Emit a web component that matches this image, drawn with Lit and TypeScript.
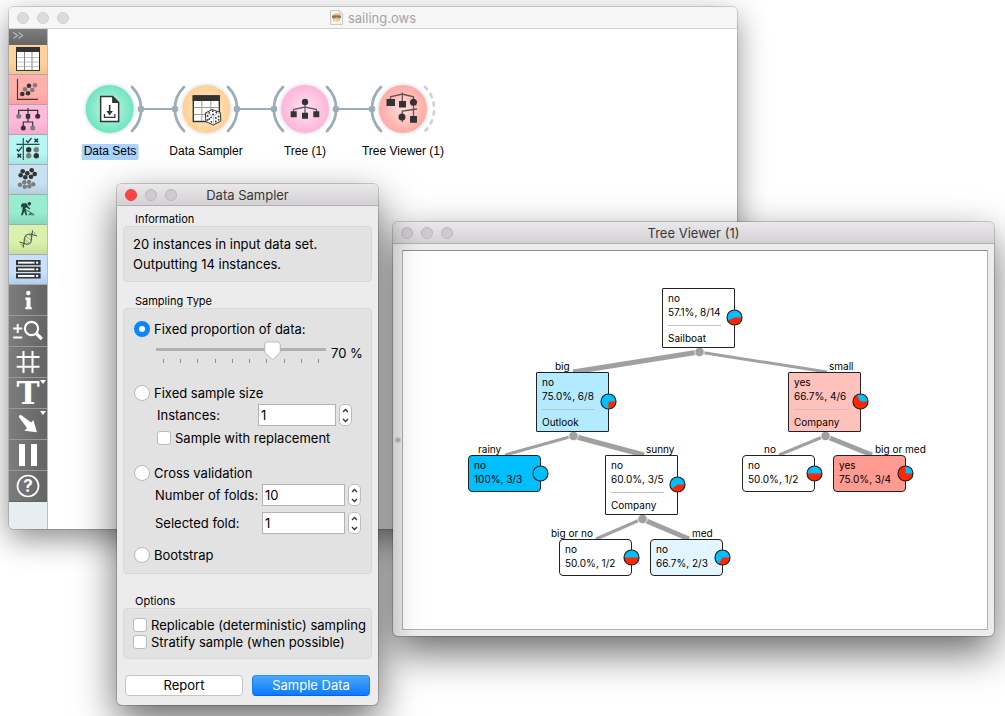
import { LitElement, html, svg, css, nothing } from "lit";
import { customElement, property } from "lit/decorators.js";

const DARK = "#333333";
const GREY = "#7c7c7c";

const dots = (pts: number[][], r: number, fill: string) =>
  pts.map(([x, y]) => svg`<circle cx=${x} cy=${y} r=${r} fill=${fill} />`);

/* ---------- Window frame shared by all three windows ---------- */

@customElement("desk-window")
export class DeskWindow extends LitElement {
  @property() heading = "";
  @property({ type: Boolean, reflect: true }) pale = false;
  @property({ type: Boolean }) closable = false;

  static styles = css`
    :host {
      display: flex;
      flex-direction: column;
      box-sizing: border-box;
      border-radius: 5px;
      background: #ececec;
      box-shadow: 0 0 0 1px rgba(0, 0, 0, 0.18), 0 16px 40px rgba(0, 0, 0, 0.6);
      font-family: Inter, "Liberation Sans", sans-serif;
      overflow: hidden;
    }
    :host([pale]) {
      background: #fff;
      box-shadow: 0 0 0 1px rgba(0, 0, 0, 0.14), 0 10px 30px rgba(0, 0, 0, 0.45);
    }
    .bar {
      display: grid;
      grid-template-columns: 1fr auto 1fr;
      align-items: center;
      height: 21px;
      flex: none;
      padding: 0 8px;
      background: linear-gradient(#eae8ea, #d3d1d3);
      border-bottom: 1px solid #b1afb1;
      color: #383838;
      font-size: 13px;
    }
    :host([pale]) .bar {
      background: #f6f6f6;
      border-bottom-color: #d1d1d1;
      color: #a3a3a3;
    }
    .lights {
      display: flex;
      gap: 8px;
    }
    .light {
      width: 12px;
      height: 12px;
      padding: 0;
      border: 1px solid #b9b7b9;
      border-radius: 50%;
      background: #cdcbcd;
    }
    :host([pale]) .light {
      background: #dcdcdc;
      border-color: #cfcfcf;
    }
    .light.close {
      background: #ff4541;
      border-color: #e5403c;
    }
    .title {
      display: flex;
      align-items: center;
      gap: 5px;
      margin: 0;
      font-size: 13px;
      font-weight: 400;
      line-height: 20px;
      white-space: nowrap;
    }
    .body {
      display: flex;
      flex: 1;
      min-height: 0;
    }
  `;

  render() {
    return html`
      <header class="bar">
        <div class="lights">
          <button class="light ${this.closable ? "close" : ""}" aria-label="Close"></button>
          <button class="light" aria-label="Minimize"></button>
          <button class="light" aria-label="Zoom"></button>
        </div>
        <h2 class="title"><slot name="icon"></slot>${this.heading}</h2>
      </header>
      <div class="body"><slot></slot></div>
    `;
  }
}

/* ---------- Toolbox on the left of the canvas ---------- */

const cross = (x: number, y: number) =>
  svg`<path d="M${x - 1.8} ${y - 1.8}l3.6 3.6m0 -3.6l-3.6 3.6" stroke=${DARK} stroke-width="1.5" />`;
const tick = (x: number, y: number) =>
  svg`<path d="M${x - 2.6} ${y}l1.8 2l3.6 -4.4" fill="none" stroke=${DARK} stroke-width="1.3" />`;

const CATEGORIES = [
  {
    name: "Data",
    tone: "c-data",
    art: svg`
      <rect x="7.5" y="2.5" width="23" height="23" fill="#fff" stroke=${DARK} />
      <path d="M8 12.5h22M8 17h22M8 21.500h22" stroke="#c4c4c4" />
      <path d="M15.500 7v18M23 7v18" stroke="#8a8a8a" />
      <rect x="7" y="2" width="24" height="5" fill=${DARK} />`,
  },
  {
    name: "Visualize",
    tone: "c-vis",
    art: svg`
      <path d="M8.500 4V24.300H29" fill="none" stroke="#4a3433" stroke-width="1.200" />
      ${dots([[26, 10.3], [16, 14.3], [23.3, 15]], 2.3, GREY)}
      ${dots([[20, 10.7], [13.3, 19], [19, 18.3]], 2.3, DARK)}`,
  },
  {
    name: "Model",
    tone: "c-model",
    art: svg`
      <path d="M19 3V17M9.700 10V5.300H28.700V10M14.300 22V17H23.700V22" fill="none" stroke=${DARK} stroke-width="1.200" />
      ${dots([[9.7, 11.3], [23.7, 23]], 2.5, GREY)}
      ${dots([[28.7, 11.3], [14.3, 23]], 2.5, DARK)}
      <rect x="16.800" y="9" width="4.400" height="4.600" fill=${DARK} />`,
  },
  {
    name: "Evaluate",
    tone: "c-eval",
    art: svg`
      <path d="M14.300 3V25M7.500 9.300H30.500" stroke="#2b4f4e" stroke-width="1.200" />
      ${tick(19.7, 5.5)}${cross(27.3, 5.5)}${tick(10.3, 14.3)}${cross(10.3, 20.7)}
      ${dots([[19.7, 14.7], [27.3, 20.7]], 2.7, DARK)}
      ${dots([[27.3, 14.7], [19.7, 20.7]], 2.7, GREY)}`,
  },
  {
    name: "Unsupervised",
    tone: "c-unsup",
    art: svg`
      ${dots([[15.3, 17.3], [20, 17], [11, 19.7], [24.3, 19.3], [15.7, 21.7], [20.3, 21.3]], 2.2, GREY)}
      ${dots([[13.7, 6.3], [22.7, 5.3], [18.3, 8.3], [11.7, 10.3], [25.7, 9], [16.3, 12.3], [22, 11.7]], 2.3, DARK)}`,
  },
  {
    name: "Prototypes",
    tone: "c-proto",
    art: svg`
      <circle cx="20.300" cy="8.700" r="1.700" fill=${DARK} />
      <path d="M11.800 10.600L13.500 8.200L17.500 8.300L19 11.200L21.300 13.800L20.500 14.500L17.500 12.300L16.200 13.600L17 15.800L18.300 20.300H16.700L15.200 16.300L13.800 20.300H12L13.400 15L13.600 11.200L12.600 12.700Z" fill="#23463b" />
      <path d="M14 13L22.500 18" stroke="#23463b" stroke-width="0.800" />
      <path d="M18.700 20.300L21 17.600L23 17.800L26.300 20.300Z" fill="#55776c" />`,
  },
  {
    name: "Bioinformatics",
    tone: "c-bio",
    art: svg`
      <g fill="none" stroke="#4e5741" stroke-width="1.200">
        <path d="M10.500 17Q14 18 17 19Q22 20 22.500 14.500Q22.300 10 23.700 5.500" />
        <path d="M14 22.500Q15.500 18 15.300 14.500Q16 9 20.500 9Q24 9.500 28 11" />
        <path d="M15.500 14L20.500 18.500M17 11.300L22.400 15.500M19.500 9.500L22.500 12M11.500 19.500L14 20.500M25 7L26.500 9" stroke="#8b9677" stroke-width="0.900" />
      </g>`,
  },
  {
    name: "Data Table",
    tone: "c-store",
    art: svg`${[5, 11.7, 18.3].map(
      (y) => svg`
        <rect x="7" y=${y} width="24.600" height="5.200" fill=${DARK} />
        <rect x="9" y=${y + 1.7} width="16.500" height="1.900" fill="#fff" />
        <rect x="27" y=${y + 1.7} width="2.200" height="1.900" fill="#fff" />`
    )}`,
  },
];

const CARET = svg`<path d="M31 2h6l-3 4z" fill="#fff" />`;

const TOOLS = [
  {
    name: "Info",
    art: svg`<circle cx="19.300" cy="8" r="2.200" fill="#fff" />
      <path d="M16.300 12.500H21.500V22H22.700V24.300H16.300V22H17.500V14.800H16.300Z" fill="#fff" />`,
  },
  {
    name: "Zoom",
    art: svg`<g fill="none" stroke="#fff">
      <path d="M4.200 12.500H13.200M8.700 8V17M4.200 21.500H13.200" stroke-width="2" />
      <circle cx="22.500" cy="12.500" r="6.600" stroke-width="2.200" />
      <path d="M27.300 17.500L32.800 23" stroke-width="3.200" /></g>`,
  },
  {
    name: "Align to grid",
    art: svg`<path d="M14.500 4V26M23.500 4V26M7.700 10H30.500M7.700 19.700H30.500" stroke="#fff" stroke-width="2" />`,
  },
  {
    name: "Text annotation",
    art: svg`<text x="19" y="26" text-anchor="middle" class="slab">T</text>${CARET}`,
  },
  {
    name: "Arrow annotation",
    art: svg`<path d="M10 6.500L12 6L22.200 13.600L24.300 10.900L28 23.300L15.500 21.700L18 18.900L9.800 8Z" fill="#fff" />${CARET}`,
  },
  {
    name: "Pause",
    art: svg`<path d="M10 4H16V26H10ZM22 4H28V26H22Z" fill="#fff" />`,
  },
  {
    name: "Help",
    art: svg`<circle cx="19" cy="15" r="10.500" fill="none" stroke="#fff" stroke-width="1.700" />
      <text x="19" y="21" text-anchor="middle" class="mark">?</text>`,
  },
];

@customElement("tool-dock")
export class ToolDock extends LitElement {
  static styles = css`
    :host {
      display: flex;
      flex-direction: column;
      width: 38px;
      flex: none;
      border-right: 1px solid #b9bcbe;
      background: #e6eef2;
    }
    button {
      display: block;
      width: 100%;
      padding: 0;
      border: 0;
    }
    svg {
      display: block;
      width: 100%;
      overflow: visible;
    }
    .more {
      height: 16px;
      background: linear-gradient(#7e7e7e, #666);
    }
    .cat {
      height: 30px;
      border-bottom: 1px solid #a9a9a9;
    }
    .tool {
      height: 31px;
      background: linear-gradient(90deg, #7d7d7d, #646464);
      border-bottom: 1px solid #999;
    }
    .tool:last-child {
      border-bottom-color: #646464;
    }
    .c-data { background: linear-gradient(#ffd39b 60%, #f0c48e); }
    .c-vis { background: linear-gradient(#ffb0ac 60%, #ff9f9b); }
    .c-model { background: linear-gradient(#ffb9dc 60%, #f5a9cd); }
    .c-eval { background: linear-gradient(#b4f7f3 60%, #a3e6e2); }
    .c-unsup { background: linear-gradient(#c6e1f2 60%, #b4cfdf); }
    .c-proto { background: linear-gradient(#98ecd0 60%, #88d9be); }
    .c-bio { background: linear-gradient(#d8f2ae 60%, #c5de9d); }
    .c-store { background: linear-gradient(#c7e0ff 60%, #b4cdeb); }
    .slab {
      font: bold 31px "DejaVu Serif", serif;
      fill: #fff;
    }
    .mark {
      font: bold 17px Inter, sans-serif;
      fill: #fff;
    }
  `;

  render() {
    return html`
      <button class="more" aria-label="Expand toolbox">
        <svg viewBox="0 0 38 16" height="16">
          <path d="M4.500 3.500L8.500 6.500L4.500 9.500M9.500 3.500L13.500 6.500L9.500 9.500" fill="none" stroke="#b9b9b9" stroke-width="1.200" />
        </svg>
      </button>
      ${CATEGORIES.map(
        (c) => html`<button class="cat ${c.tone}" aria-label=${c.name}>
          <svg viewBox="0 0 38 29" height="29">${c.art}</svg>
        </button>`
      )}
      ${TOOLS.map(
        (t) => html`<button class="tool" aria-label=${t.name}>
          <svg viewBox="0 0 38 30" height="30">${t.art}</svg>
        </button>`
      )}
    `;
  }
}

/* ---------- Workflow canvas ---------- */

const WIDGETS = [
  {
    name: "Data Sets",
    x: 62,
    tone: "w-green",
    selected: true,
    art: svg`
      <path d="M15 11.500H27L33 17.500V36.500H15Z" fill="#fff" stroke=${DARK} stroke-width="1.500" />
      <path d="M26.500 11V18H33.500Z" fill=${DARK} />
      <path d="M24 20V28" stroke=${DARK} stroke-width="1.600" />
      <path d="M20.800 26H27.200L24 30.500Z" fill=${DARK} />
      <path d="M18.800 29V32.300H29.200V29" fill="none" stroke=${DARK} stroke-width="1.300" />`,
  },
  {
    name: "Data Sampler",
    x: 158,
    tone: "w-orange",
    art: svg`
      <rect x="11" y="11" width="26" height="25.500" fill="#fff" stroke=${DARK} stroke-width="1.400" />
      <path d="M11.500 22.500H36.500M11.500 29.500H36.500M19.500 16V36M28.500 16V36" stroke="#a79a8a" />
      <rect x="10.300" y="10.300" width="27.400" height="5.700" fill=${DARK} />
      <path d="M23 28L30 24.500L38 27.500L38.500 36L31 40L23.500 36.500Z" fill="#fff" stroke=${DARK} stroke-width="1" stroke-linejoin="round" />
      <path d="M23 28L31.500 31L38 27.500M31.500 31L31 40" fill="none" stroke="#888" stroke-width="0.500" />
      ${dots([[27, 27.8], [30.5, 26.2], [34, 27.5], [30.8, 29.3], [25.3, 31], [28.8, 32.3], [27, 34], [25.3, 35], [29, 36.8], [33.5, 33], [36.3, 31.5], [33.5, 36.5], [36.3, 34.8]], 0.9, DARK)}`,
  },
  {
    name: "Tree (1)",
    x: 257,
    tone: "w-pink",
    art: svg`
      <path d="M24 17V28M12.500 28V24.500L24 22L35.500 24.500V28" fill="none" stroke="#6b5a62" stroke-width="1.300" />
      <circle cx="24" cy="17" r="3.200" fill=${DARK} />
      <path d="M9.700 26.300H15.700V32.300H9.700ZM21 27.800H27V33.800H21ZM32.300 26.300H38.300V32.300H32.300Z" fill=${DARK} />`,
  },
  {
    name: "Tree Viewer (1)",
    x: 355,
    tone: "w-red",
    art: svg`
      <path d="M23.300 7.500V17M11.500 16V11.800L23.300 9L34.500 11.800V34M23.300 37V26L38 24" fill="none" stroke="#6b504e" stroke-width="1.300" />
      <path d="M7.500 14H16V21H7.500ZM20 16H27V22.500H20ZM31 31H38V37.800H31Z" fill=${DARK} />
      <circle cx="34.500" cy="17.300" r="3.500" fill=${DARK} />
      <circle cx="23" cy="32" r="3.500" fill=${DARK} />`,
  },
];

@customElement("flow-canvas")
export class FlowCanvas extends LitElement {
  static styles = css`
    :host {
      display: block;
      position: relative;
      flex: 1;
      background: #fff;
      font: 12px "Liberation Sans", sans-serif;
      color: #000;
    }
    .links {
      position: absolute;
      left: 0;
      top: 0;
    }
    .widget {
      position: absolute;
      top: 56px;
      display: flex;
      flex-direction: column;
      align-items: center;
      gap: 11px;
      transform: translateX(-50%);
    }
    .disc {
      width: 48px;
      height: 48px;
      border-radius: 50%;
      box-shadow: 0 0 4px rgba(90, 120, 140, 0.35);
    }
    .name {
      padding: 0 2px 2px;
      line-height: 14px;
      border-radius: 2px;
      white-space: nowrap;
    }
    .name.on {
      background: #a9d2fd;
    }
    .w-green { background: radial-gradient(#cdf3e5, #6be5c0 72%); }
    .w-orange { background: radial-gradient(#fff0dd, #ffcf90 72%); }
    .w-pink { background: radial-gradient(#ffe4f1, #ffb3d8 72%); }
    .w-red { background: radial-gradient(#ffdfdc, #ffa9a3 72%); }
  `;

  render() {
    const y = 80;
    const right = (x: number) => `M${x + 22} ${y - 22}A31 31 0 0 1 ${x + 22} ${y + 22}`;
    const left = (x: number) => `M${x - 22} ${y - 22}A31 31 0 0 0 ${x - 22} ${y + 22}`;
    return html`
      <svg class="links" width="420" height="140" fill="none" stroke="#9badb8" stroke-width="2.800" stroke-linecap="round">
        ${WIDGETS.slice(1).map((w, i) => {
          const from = WIDGETS[i].x;
          return svg`
            <path d=${right(from)} />
            <path d=${left(w.x)} />
            <path d="M${from + 31} ${y}H${w.x - 31}" stroke-width="2" />
            <circle cx=${from + 31} cy=${y} r="3.300" fill="#9badb8" stroke="none" />
            <circle cx=${w.x - 31} cy=${y} r="3.300" fill="#9badb8" stroke="none" />`;
        })}
        <path d=${right(355)} stroke="#c9d4da" stroke-dasharray="3 6" />
      </svg>
      ${WIDGETS.map(
        (w) => html`<div class="widget" style="left:${w.x}px">
          <svg class="disc ${w.tone}" viewBox="0 0 48 48">${w.art}</svg>
          <span class="name ${w.selected ? "on" : ""}">${w.name}</span>
        </div>`
      )}
    `;
  }
}

/* ---------- Data Sampler form ---------- */

@customElement("sampler-form")
export class SamplerForm extends LitElement {
  static styles = css`
    :host {
      display: flex;
      flex-direction: column;
      flex: 1;
      min-width: 0;
      padding: 6px 6px 9px;
      font: 13px Inter, "Liberation Sans", sans-serif;
      color: #000;
    }
    h3 {
      margin: 0 0 0 12px;
      font-size: 11px;
      font-weight: 400;
      line-height: 14px;
    }
    .box {
      box-sizing: border-box;
      background: #e2e2e2;
      border: 1px solid #d9d9d9;
      border-radius: 4px;
      padding: 7px 4px 7px 9px;
      margin-bottom: 12px;
    }
    .info p {
      margin: 0;
      line-height: 20px;
    }
    .types {
      padding: 9px 4px 7px 10px;
      margin-bottom: 20px;
    }
    .row {
      display: flex;
      align-items: center;
      line-height: 16px;
      white-space: nowrap;
    }
    .choice {
      gap: 4px;
      height: 22px;
    }
    .sub {
      padding-left: 23px;
      height: 22px;
    }
    .check {
      gap: 4px;
      height: 24px;
    }
    .tight {
      height: 17px;
    }
    .opts {
      padding: 7px 4px 8px 9px;
    }
    .after {
      margin-bottom: 12px;
    }
    input {
      margin: 0;
      font: inherit;
      color: inherit;
    }
    input[type="radio"],
    input[type="checkbox"] {
      appearance: none;
      box-sizing: border-box;
      flex: none;
      background: #fff;
      border: 1px solid #b9b9b9;
    }
    input[type="radio"] {
      width: 16px;
      height: 16px;
      border-radius: 50%;
    }
    input[type="radio"]:checked {
      border: 5px solid #0a84ff;
    }
    input[type="checkbox"] {
      width: 14px;
      height: 14px;
      border-radius: 3px;
    }
    input[type="number"] {
      appearance: textfield;
      box-sizing: border-box;
      height: 22px;
      width: 78px;
      padding: 0 2px;
      border: 1px solid #b2b2b2;
      border-radius: 0;
      background: #fff;
    }
    .folds input[type="number"] {
      width: 83px;
    }
    input::-webkit-inner-spin-button {
      display: none;
    }
    .lab {
      flex: 1;
    }
    .inst {
      padding-right: 15px;
    }
    .folds {
      padding-left: 21px;
      padding-right: 6px;
      margin-bottom: 6px;
    }
    .folds + .choice {
      margin-top: 10px;
    }
    .step {
      display: flex;
      flex-direction: column;
      box-sizing: border-box;
      width: 13px;
      height: 22px;
      margin-left: 3px;
      border: 1px solid #bdbdbd;
      border-radius: 5px;
      background: #fff;
      overflow: hidden;
    }
    .step button {
      flex: 1;
      padding: 0;
      border: 0;
      background: none;
      display: flex;
      align-items: center;
      justify-content: center;
    }
    .slide {
      display: flex;
      align-items: flex-start;
      gap: 5px;
      padding-left: 22px;
      height: 24px;
      margin: 1px 0 17px;
    }
    .rail {
      width: 170px;
      flex: none;
    }
    .rail input {
      appearance: none;
      display: block;
      width: 100%;
      height: 18px;
      background: linear-gradient(#b0b0b0, #b0b0b0) center 7px / 100% 3px no-repeat;
    }
    .rail input::-webkit-slider-thumb {
      appearance: none;
      width: 17px;
      height: 19px;
      background: url("data:image/svg+xml,%3Csvg xmlns='http://www.w3.org/2000/svg' viewBox='0 0 17 19'%3E%3Cpath d='M3.500 .8h10a3 3 0 0 1 2.800 3v6.200q0 1.500-1 2.400l-5.600 5.300q-1.200 1-2.400 0l-5.600-5.300q-1-.9-1-2.400v-6.200a3 3 0 0 1 2.800-3z' fill='white' stroke='%23b5b5b5'/%3E%3C/svg%3E");
    }
    .ticks {
      display: flex;
      justify-content: space-between;
      padding: 0 7px;
      height: 4px;
    }
    .ticks i {
      width: 1px;
      background: #8f8f8f;
    }
    output {
      padding-top: 4px;
      line-height: 16px;
      white-space: nowrap;
    }
    .actions {
      display: grid;
      grid-template-columns: 1fr 1fr;
      gap: 9px;
      padding: 4px 2px 0;
    }
    .actions button {
      height: 21px;
      box-sizing: border-box;
      padding: 0;
      font: inherit;
      line-height: 19px;
      color: #000;
      background: #fff;
      border: 1px solid #c3c3c3;
      border-radius: 4px;
    }
    .actions .go {
      color: #fff;
      background: linear-gradient(#4aa6fb, #0a7bff);
      border-color: #2a93fa #1a7dfa #1358f5;
    }
  `;

  private number(id: string, label: string, value: number, cls: string) {
    return html`<div class="row sub ${cls}">
      <label class="lab" for=${id}>${label}</label>
      <input id=${id} type="number" .value=${String(value)} />
      <span class="step">
        <button aria-label="Increase ${label}">
          <svg width="7" height="5"><path d="M1 4L3.500 1.500L6 4" fill="none" stroke="#333" stroke-width="1.300" /></svg>
        </button>
        <button aria-label="Decrease ${label}">
          <svg width="7" height="5"><path d="M1 1L3.500 3.500L6 1" fill="none" stroke="#333" stroke-width="1.300" /></svg>
        </button>
      </span>
    </div>`;
  }

  private radio(label: string, checked = false) {
    return html`<label class="row choice">
      <input type="radio" name="kind" .checked=${checked} />${label}
    </label>`;
  }

  render() {
    return html`
      <h3>Information</h3>
      <div class="box info">
        <p>20 instances in input data set.</p>
        <p>Outputting 14 instances.</p>
      </div>
      <h3>Sampling Type</h3>
      <div class="box types" role="radiogroup" aria-label="Sampling Type">
        ${this.radio("Fixed proportion of data:", true)}
        <div class="slide">
          <div class="rail">
            <input type="range" aria-label="Proportion of data" min="0" max="99" .value=${"70"} />
            <div class="ticks">${Array.from({ length: 10 }, () => html`<i></i>`)}</div>
          </div>
          <output>70 %</output>
        </div>
        ${this.radio("Fixed sample size")}
        ${this.number("instances", "Instances:", 1, "inst")}
        <label class="row sub check after"><input type="checkbox" />Sample with replacement</label>
        ${this.radio("Cross validation")}
        ${this.number("folds", "Number of folds:", 10, "folds")}
        ${this.number("selected", "Selected fold:", 1, "folds")}
        ${this.radio("Bootstrap")}
      </div>
      <h3>Options</h3>
      <div class="box opts">
        <label class="row check tight"><input type="checkbox" />Replicable (deterministic) sampling</label>
        <label class="row check tight"><input type="checkbox" />Stratify sample (when possible)</label>
      </div>
      <div class="actions">
        <button>Report</button>
        <button class="go">Sample Data</button>
      </div>
    `;
  }
}

/* ---------- Tree Viewer ---------- */

type TreeNode = {
  x: number;
  y: number;
  verdict: string;
  stat: string;
  split?: string;
  share: number;
  fill: string;
  label?: string;
  labelX?: number;
  parent?: number;
  weight?: number;
};

const NODES: TreeNode[] = [
  { x: 259, y: 37, verdict: "no", stat: "57.1%, 8/14", split: "Sailboat", share: 8 / 14, fill: "#ffffff" },
  { x: 133, y: 121, verdict: "no", stat: "75.0%, 6/8", split: "Outlook", share: 0.75, fill: "#b2eaff", label: "big", labelX: 152, parent: 0, weight: 5 },
  { x: 385, y: 121, verdict: "yes", stat: "66.7%, 4/6", split: "Company", share: 1 / 3, fill: "#ffc1bb", label: "small", labelX: 426, parent: 0, weight: 3 },
  { x: 65, y: 204, verdict: "no", stat: "100%, 3/3", share: 1, fill: "#00bfff", label: "rainy", labelX: 75, parent: 1, weight: 3 },
  { x: 202, y: 204, verdict: "no", stat: "60.0%, 3/5", split: "Company", share: 0.6, fill: "#ffffff", label: "sunny", labelX: 243, parent: 1, weight: 5 },
  { x: 339, y: 204, verdict: "no", stat: "50.0%, 1/2", share: 0.5, fill: "#ffffff", label: "no", labelX: 361, parent: 2, weight: 3 },
  { x: 430, y: 204, verdict: "yes", stat: "75.0%, 3/4", share: 0.25, fill: "#ff9b90", label: "big or med", labelX: 472, parent: 2, weight: 5 },
  { x: 156, y: 288, verdict: "no", stat: "50.0%, 1/2", share: 0.5, fill: "#ffffff", label: "big or no", labelX: 148, parent: 4, weight: 3 },
  { x: 247, y: 288, verdict: "no", stat: "66.7%, 2/3", share: 2 / 3, fill: "#e3f6ff", label: "med", labelX: 289, parent: 4, weight: 5 },
];

@customElement("tree-canvas")
export class TreeCanvas extends LitElement {
  static styles = css`
    :host {
      display: flex;
      align-items: center;
      flex: 1;
      padding: 6px 6px 6px 2px;
      gap: 1px;
      font: 10px Inter, "Liberation Sans", sans-serif;
      color: #000;
    }
    .grip {
      width: 6px;
      height: 6px;
      border-radius: 50%;
      background: #b5b5b5;
      border: 1px solid #d0d0d0;
      box-sizing: border-box;
    }
    .sheet {
      position: relative;
      flex: 1;
      align-self: stretch;
      border: 1px solid #b0b0b0;
      border-top-color: #8e8e8e;
      background: #fff;
    }
    .edges {
      position: absolute;
      left: 0;
      top: 0;
    }
    .node {
      position: absolute;
      box-sizing: border-box;
      width: 73px;
      padding: 2px 5px;
      border: 1px solid #222;
      line-height: 14px;
      white-space: nowrap;
      border-radius: 1px;
    }
    .node.leaf {
      height: 37px;
      border-radius: 4px;
    }
    .node hr {
      margin: 6px 14px 5px 0;
      border: 0;
      height: 1px;
      background: #c2c2c2;
    }
    .node hr {
      margin-right: 8px;
    }
    .pie {
      position: absolute;
      right: -9px;
      top: 20px;
    }
    .leaf .pie {
      top: 9px;
    }
    .tag {
      position: absolute;
      line-height: 12px;
      white-space: nowrap;
    }
  `;

  private pie(share: number) {
    const a = share * 2 * Math.PI;
    const px = 8.5 + 7.5 * Math.cos(a);
    const py = 8.5 - 7.5 * Math.sin(a);
    return html`<svg class="pie" width="17" height="17">
      <circle cx="8.500" cy="8.500" r="7.500" fill=${share === 1 ? "#00bfff" : "#ff2600"} />
      ${share < 1
        ? svg`<path d="M8.500 8.500H16A7.500 7.500 0 ${share > 0.5 ? 1 : 0} 0 ${px} ${py}Z" fill="#00bfff" />`
        : nothing}
      <circle cx="8.500" cy="8.500" r="7.500" fill="none" stroke="#222" stroke-width="1.200" />
    </svg>`;
  }

  render() {
    return html`
      <span class="grip"></span>
      <div class="sheet">
        <svg class="edges" width="580" height="370">
          ${NODES.filter((n) => n.parent !== undefined).map((n) => {
            const p = NODES[n.parent!];
            const side = n.x < p.x ? 1 : 3;
            return svg`<path d="M${p.x + 37} ${p.y + 64}L${n.x + 36 + side} ${n.y}" stroke="#a0a0a4" stroke-width=${n.weight} />`;
          })}
          ${NODES.filter((n) => n.split).map(
            (n) => svg`<circle cx=${n.x + 37.5} cy=${n.y + 64} r="4.700" fill="#a0a0a4" stroke="#fff" stroke-width="0.800" />`
          )}
        </svg>
        ${NODES.map(
          (n) => html`
            ${n.label
              ? html`<span class="tag" style="left:${n.labelX}px;top:${n.y - 12}px">${n.label}</span>`
              : nothing}
            <div class="node ${n.split ? "" : "leaf"}" style="left:${n.x}px;top:${n.y}px;background:${n.fill}">
              <div>${n.verdict}</div>
              <div>${n.stat}</div>
              ${n.split ? html`<hr /><div>${n.split}</div>` : nothing}
              ${this.pie(n.share)}
            </div>
          `
        )}
      </div>
    `;
  }
}

/* ---------- Desktop ---------- */

@customElement("app-root")
export class AppRoot extends LitElement {
  static styles = css`
    :host {
      display: block;
      position: relative;
      min-height: 100vh;
      overflow: hidden;
      background: #fff;
    }
    desk-window {
      position: absolute;
    }
    .main {
      left: 9px;
      top: 7px;
      right: 268px;
      height: 522px;
    }
    .sampler {
      left: 117px;
      top: 184px;
      width: 261px;
    }
    .tree {
      left: 393px;
      top: 222px;
      right: 11px;
      height: 414px;
    }
  `;

  render() {
    return html`
      <desk-window class="main" heading="sailing.ows" pale>
        <svg slot="icon" width="13" height="15" viewBox="0 0 13 15">
          <path d="M0.500 0.500H9L12.500 4V14.500H0.500Z" fill="#f4f4f4" stroke="#c9c9c9" />
          <path d="M9 0.500V4H12.500Z" fill="#ddd" stroke="#c9c9c9" stroke-width="0.600" />
          <circle cx="6.500" cy="7.500" r="4" fill="#f7b25c" />
          <path d="M2 5.500H11V7.500Q9 9 7 7Q4.500 9 2 7.500Z" fill="#777" />
          <path d="M4.500 9.700Q6.500 11 8.500 9.700" stroke="#fff" fill="none" />
        </svg>
        <tool-dock></tool-dock>
        <flow-canvas></flow-canvas>
      </desk-window>
      <desk-window class="tree" heading="Tree Viewer (1)">
        <tree-canvas></tree-canvas>
      </desk-window>
      <desk-window class="sampler" heading="Data Sampler" closable>
        <sampler-form></sampler-form>
      </desk-window>
    `;
  }
}
